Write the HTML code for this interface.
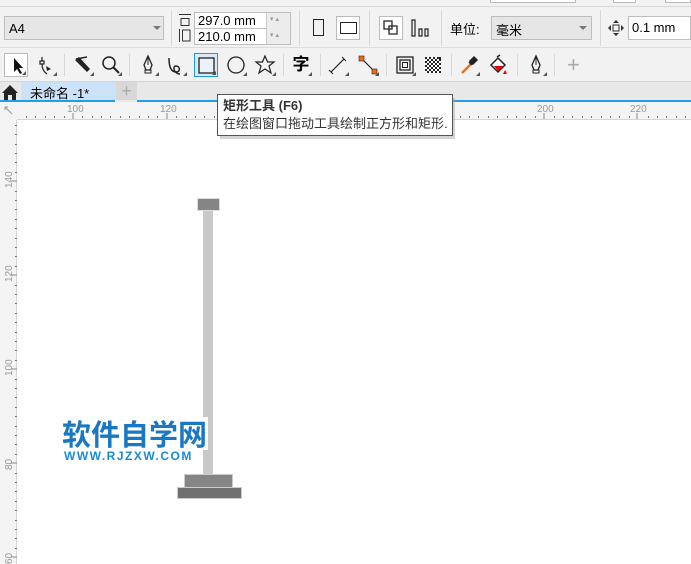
<!DOCTYPE html>
<html><head><meta charset="utf-8"><style>
*{margin:0;padding:0;box-sizing:border-box}
body{width:691px;height:564px;overflow:hidden;background:#f2f2f2;font-family:"Liberation Sans","Noto Sans CJK SC",sans-serif;position:relative;font-size:12px;color:#000}
.a{position:absolute}
.box{position:absolute;background:#fff;border:1px solid #bdbdbd}
.sep{position:absolute;width:1px;background:#d8d8d8}
.tool{position:absolute;top:53px;width:24px;height:24px}
.tool svg{width:24px;height:24px}
.tri{position:absolute;right:1px;bottom:1px;width:0;height:0;border-left:4px solid transparent;border-bottom:4px solid #555}
</style></head><body>
<div class="a" style="left:0;top:0;width:691px;height:7px;border-bottom:1px solid #d8d8d8"></div>
<div class="a" style="left:490px;top:0;width:86px;height:3px;border:1px solid #bbb;border-top:0;background:#fff"></div>
<div class="a" style="left:613px;top:0;width:23px;height:3px;border:1px solid #bbb;border-top:0;background:#fff"></div>
<div class="a" style="left:665px;top:0;width:26px;height:3px;border:1px solid #bbb;border-top:0;background:#fff"></div>
<div class="a" style="left:4px;top:16px;width:160px;height:24px;background:#e6e6e6;border:1px solid #bdbdbd;font-size:13px;padding:4px 0 0 4px">A4</div>
<div class="a" style="left:153px;top:26px;border-left:4px solid transparent;border-right:4px solid transparent;border-top:4px solid #777"></div>
<div class="sep" style="left:171px;top:10px;height:36px"></div>
<svg class="a" style="left:178px;top:13px" width="14" height="30"><path d="M1 1.5H13M3 5.5H11V12.5H3Z" fill="none" stroke="#333"/><path d="M1.5 16V29M4.5 17V28H12V17Z" fill="none" stroke="#333"/></svg>
<div class="box" style="left:194px;top:12px;width:97px;height:17px;font-size:13px;padding:0 0 0 3px;line-height:15px">297.0 mm</div>
<div class="box" style="left:194px;top:28px;width:97px;height:17px;font-size:13px;padding:0 0 0 3px;line-height:15px">210.0 mm</div>
<div class="a" style="left:266px;top:13px;width:24px;height:31px;background:#ececec;border-left:1px solid #ccc;color:#999;font-size:7px;line-height:8px;padding:3px 0 0 3px">▾ ▴<br><br>▾ ▴</div>
<div class="sep" style="left:299px;top:10px;height:36px"></div>
<div class="a" style="left:313px;top:19px;width:11px;height:17px;border:1.5px solid #222"></div>
<div class="box" style="left:336px;top:16px;width:24px;height:24px;border-color:#bbb"></div>
<div class="a" style="left:340px;top:22px;width:17px;height:12px;border:1.5px solid #222"></div>
<div class="sep" style="left:369px;top:10px;height:36px"></div>
<div class="box" style="left:379px;top:16px;width:24px;height:24px"></div>
<svg class="a" style="left:382px;top:19px" width="18" height="18"><path d="M2 2h8v8H2zM7 7h8v8H7z" fill="none" stroke="#222" stroke-width="1.3"/></svg>
<svg class="a" style="left:410px;top:19px" width="20" height="18"><path d="M2 1v16h3V1zM9 10v7h3v-7zM15 10v7h3v-7z" fill="none" stroke="#222" stroke-width="1.2"/></svg>
<div class="sep" style="left:441px;top:10px;height:36px"></div>
<div class="a" style="left:450px;top:19px;font-size:13px">单位:</div>
<div class="a" style="left:491px;top:16px;width:101px;height:24px;background:#e6e6e6;border:1px solid #bdbdbd;font-size:13px;padding:3px 0 0 4px">毫米</div>
<div class="a" style="left:579px;top:26px;border-left:4px solid transparent;border-right:4px solid transparent;border-top:4px solid #777"></div>
<div class="sep" style="left:600px;top:10px;height:36px"></div>
<svg class="a" style="left:608px;top:20px" width="16" height="16"><path d="M8 0l3 3H5zM8 16l3-3H5zM0 8l3-3v6zM16 8l-3-3v6z" fill="#333"/><rect x="5" y="5" width="6" height="6" fill="none" stroke="#333"/></svg>
<div class="box" style="left:628px;top:16px;width:63px;height:24px;font-size:13px;padding:3px 0 0 3px">0.1 mm</div>
<div class="a" style="left:0;top:47px;width:691px;height:1px;background:#dcdcdc"></div>
<div class="tool" style="left:4px;background:#fff;border:1px solid #bbb"><svg viewBox="0 0 24 24"><path d="M9 4v14l3-3 3 5 2-1-3-5h4z" fill="#111"/></svg><div class="tri"></div></div>
<div class="tool" style="left:34px"><svg viewBox="0 0 24 24"><path d="M8 4v4M6 8h4v3H6zM8 11c0 5 2 8 5 10" fill="none" stroke="#222" stroke-width="1.2"/><path d="M12 13l5 3-4 2z" fill="#222"/></svg><div class="tri"></div></div>
<div class="sep" style="left:64px;top:54px;height:22px"></div>
<div class="tool" style="left:71px"><svg viewBox="0 0 24 24"><path d="M4 7l12 12 3-3L8 4z" fill="#222"/><path d="M5 6l11-2" stroke="#222" stroke-width="1.5"/></svg><div class="tri"></div></div>
<div class="tool" style="left:99px"><svg viewBox="0 0 24 24"><circle cx="10" cy="10" r="6" fill="none" stroke="#222" stroke-width="1.5"/><path d="M14 14l6 6" stroke="#222" stroke-width="2"/></svg><div class="tri"></div></div>
<div class="sep" style="left:129px;top:54px;height:22px"></div>
<div class="tool" style="left:136px"><svg viewBox="0 0 24 24"><path d="M12 3l-4 9 2 5h4l2-5z" fill="none" stroke="#222" stroke-width="1.3"/><path d="M12 4v8M9 17h6v3H9z" fill="none" stroke="#222"/></svg><div class="tri"></div></div>
<div class="tool" style="left:164px"><svg viewBox="0 0 24 24"><path d="M5 5c0 8 2 14 7 14s4-6 0-6-2 8 4 8" fill="none" stroke="#222" stroke-width="1.5"/></svg><div class="tri"></div></div>
<div class="tool" style="left:194px;background:#dce9f7;border:1px solid #1e9ae0"><svg viewBox="0 0 24 24"><rect x="4" y="4" width="15" height="15" fill="#eaf2fb" stroke="#222" stroke-width="1.3"/></svg><div class="tri"></div></div>
<div class="tool" style="left:224px"><svg viewBox="0 0 24 24"><ellipse cx="12" cy="12" rx="8" ry="8" fill="none" stroke="#222" stroke-width="1.3"/></svg><div class="tri"></div></div>
<div class="tool" style="left:253px"><svg viewBox="0 0 24 24"><path d="M12 3l2.6 6h6.4l-5 4 2 7-6-4-6 4 2-7-5-4h6.4z" fill="none" stroke="#222" stroke-width="1.2"/></svg><div class="tri"></div></div>
<div class="sep" style="left:283px;top:54px;height:22px"></div>
<div class="tool" style="left:289px;font-size:17px;font-weight:bold;line-height:24px;text-align:center">字<div class="tri"></div></div>
<div class="sep" style="left:320px;top:54px;height:22px"></div>
<div class="tool" style="left:326px"><svg viewBox="0 0 24 24"><path d="M5 19L18 6" stroke="#222" stroke-width="1.2"/><path d="M3 17l4 4M16 4l4 4" stroke="#222"/></svg><div class="tri"></div></div>
<div class="tool" style="left:356px"><svg viewBox="0 0 24 24"><path d="M6 6l12 12" stroke="#222" stroke-width="1.2"/><rect x="3" y="3" width="5" height="5" fill="#f26a0f" stroke="#222" stroke-width=".6"/><rect x="16" y="16" width="5" height="5" fill="#f26a0f" stroke="#222" stroke-width=".6"/></svg><div class="tri"></div></div>
<div class="sep" style="left:386px;top:54px;height:22px"></div>
<div class="tool" style="left:393px"><svg viewBox="0 0 24 24"><rect x="4" y="4" width="16" height="16" fill="none" stroke="#222" stroke-width="1.3"/><rect x="7" y="7" width="10" height="10" fill="none" stroke="#222" stroke-width="1.3"/><rect x="9.5" y="9.5" width="5" height="5" fill="none" stroke="#222"/></svg><div class="tri"></div></div>
<div class="tool" style="left:421px"><svg viewBox="0 0 24 24"><rect x="4" y="4" width="16" height="16" fill="#222"/><path d="M6 4h2v2H6zM10 4h2v2h-2zM14 4h2v2h-2zM4 6h2v2H4zM8 6h2v2H8zM12 6h2v2h-2zM16 6h2v2h-2zM6 8h2v2H6zM10 8h2v2h-2zM14 8h2v2h-2zM18 8h2v2h-2zM4 10h2v2H4zM8 10h2v2H8zM12 10h2v2h-2zM16 10h2v2h-2zM6 12h2v2H6zM10 12h2v2h-2zM14 12h2v2h-2zM18 12h2v2h-2zM4 14h2v2H4zM8 14h2v2H8zM12 14h2v2h-2zM16 14h2v2h-2zM6 16h2v2H6zM10 16h2v2h-2zM14 16h2v2h-2zM18 16h2v2h-2zM8 18h2v2H8zM12 18h2v2h-2zM16 18h2v2h-2zM4 18h2v2H4z" fill="#fff"/></svg></div>
<div class="sep" style="left:451px;top:54px;height:22px"></div>
<div class="tool" style="left:457px"><svg viewBox="0 0 24 24"><path d="M5 20l9-9" stroke="#e8741e" stroke-width="2.5"/><path d="M13 8l4-4 3 3-4 4z M12 9l3 3" fill="#222" stroke="#222" stroke-width="1.5"/></svg><div class="tri"></div></div>
<div class="tool" style="left:487px"><svg viewBox="0 0 24 24"><path d="M4 12l7-7 7 7-7 7z" fill="#fff" stroke="#222" stroke-width="1.5"/><path d="M7 13h9l-5 5z" fill="#e00"/><path d="M10 4l3-2" stroke="#222" stroke-width="1.5"/><path d="M18 17l2 4h-4z" fill="#e00"/></svg></div>
<div class="sep" style="left:517px;top:54px;height:22px"></div>
<div class="tool" style="left:524px"><svg viewBox="0 0 24 24"><path d="M12 3l-4 9 2 5h4l2-5z" fill="none" stroke="#222" stroke-width="1.3"/><path d="M12 4v8M9 17h6v3H9z" fill="none" stroke="#222"/></svg><div class="tri"></div></div>
<div class="sep" style="left:554px;top:54px;height:22px"></div>
<div class="a" style="left:567px;top:54px;font-size:22px;color:#aaa;line-height:22px">+</div>
<div class="a" style="left:0;top:81px;width:691px;height:1px;background:#d5d5d5"></div>
<div class="a" style="left:0;top:82px;width:691px;height:19px;background:#e8e8e8"></div>
<svg class="a" style="left:1px;top:84px" width="18" height="16"><path d="M9 1L1 9h2v7h4v-5h4v5h4V9h2z" fill="#222"/></svg>
<div class="a" style="left:21px;top:82px;width:95px;height:19px;background:#cce2f8;font-size:13px;padding:1px 0 0 9px">未命名 -1*</div>
<div class="a" style="left:116px;top:82px;width:21px;height:19px;background:#d8d8d8;color:#aaa;font-size:18px;text-align:center;line-height:18px">+</div>
<div class="a" style="left:0;top:100px;width:691px;height:2px;background:#1ea0e8"></div>
<div class="a" style="left:115px;top:100px;width:22px;height:2px;background:#e8e8e8"></div>
<div class="a" style="left:0;top:102px;width:691px;height:18px;background:#f4f4f4"></div>
<div class="a" style="left:0;top:102px;width:17px;height:462px;background:#f4f4f4"></div>
<div class="a" style="left:17px;top:119px;width:674px;height:1px;background:#d5d5d5"></div>
<div class="a" style="left:16px;top:120px;width:1px;height:444px;background:#d5d5d5"></div>
<svg class="a" style="left:0;top:102px" width="691" height="18">
<g fill="#999" font-size="10" font-family="Liberation Sans">
<text x="67" y="10">100</text><text x="160" y="10">120</text><text x="537" y="10">200</text><text x="630" y="10">220</text></g>
<g stroke="#888"><path d="M73 11v6M167 11v6M544 11v6M637 11v6"/></g>
<g fill="#777">
<rect x="26" y="14" width="1" height="2"/><rect x="35" y="14" width="1" height="2"/><rect x="45" y="14" width="1" height="2"/><rect x="54" y="14" width="1" height="2"/><rect x="64" y="14" width="1" height="2"/><rect x="82" y="14" width="1" height="2"/><rect x="92" y="14" width="1" height="2"/><rect x="101" y="14" width="1" height="2"/><rect x="110" y="14" width="1" height="2"/><rect x="120" y="14" width="1" height="2"/><rect x="129" y="14" width="1" height="2"/><rect x="139" y="14" width="1" height="2"/><rect x="148" y="14" width="1" height="2"/><rect x="157" y="14" width="1" height="2"/><rect x="176" y="14" width="1" height="2"/><rect x="186" y="14" width="1" height="2"/><rect x="195" y="14" width="1" height="2"/><rect x="204" y="14" width="1" height="2"/><rect x="214" y="14" width="1" height="2"/>
<rect x="460" y="14" width="1" height="2"/><rect x="469" y="14" width="1" height="2"/><rect x="478" y="14" width="1" height="2"/><rect x="488" y="14" width="1" height="2"/><rect x="497" y="14" width="1" height="2"/><rect x="507" y="14" width="1" height="2"/><rect x="516" y="14" width="1" height="2"/><rect x="525" y="14" width="1" height="2"/><rect x="535" y="14" width="1" height="2"/><rect x="554" y="14" width="1" height="2"/><rect x="563" y="14" width="1" height="2"/><rect x="572" y="14" width="1" height="2"/><rect x="582" y="14" width="1" height="2"/><rect x="591" y="14" width="1" height="2"/><rect x="601" y="14" width="1" height="2"/><rect x="610" y="14" width="1" height="2"/><rect x="619" y="14" width="1" height="2"/><rect x="629" y="14" width="1" height="2"/><rect x="648" y="14" width="1" height="2"/><rect x="657" y="14" width="1" height="2"/><rect x="666" y="14" width="1" height="2"/><rect x="676" y="14" width="1" height="2"/><rect x="685" y="14" width="1" height="2"/>
</g>
<path d="M5 5l7 7M5 5h3M5 5v3" stroke="#999" fill="none"/>
</svg>
<svg class="a" style="left:0;top:120px" width="17" height="444">
<g fill="#999" font-size="10" font-family="Liberation Sans">
<text transform="translate(12,68) rotate(-90)">140</text><text transform="translate(12,162) rotate(-90)">120</text><text transform="translate(12,256) rotate(-90)">100</text><text transform="translate(12,350) rotate(-90)">80</text><text transform="translate(12,444) rotate(-90)">60</text></g>
<g stroke="#888"><path d="M11 61h6M11 155h6M11 249h6M11 343h6M11 437h6"/></g>
<g fill="#777">
<rect x="15" y="5" width="2" height="1"/><rect x="15" y="14" width="2" height="1"/><rect x="15" y="24" width="2" height="1"/><rect x="15" y="33" width="2" height="1"/><rect x="15" y="42" width="2" height="1"/><rect x="15" y="52" width="2" height="1"/><rect x="15" y="71" width="2" height="1"/><rect x="15" y="80" width="2" height="1"/><rect x="15" y="89" width="2" height="1"/><rect x="15" y="99" width="2" height="1"/><rect x="15" y="108" width="2" height="1"/><rect x="15" y="118" width="2" height="1"/><rect x="15" y="127" width="2" height="1"/><rect x="15" y="136" width="2" height="1"/><rect x="15" y="146" width="2" height="1"/><rect x="15" y="165" width="2" height="1"/><rect x="15" y="174" width="2" height="1"/><rect x="15" y="183" width="2" height="1"/><rect x="15" y="193" width="2" height="1"/><rect x="15" y="202" width="2" height="1"/><rect x="15" y="212" width="2" height="1"/><rect x="15" y="221" width="2" height="1"/><rect x="15" y="230" width="2" height="1"/><rect x="15" y="240" width="2" height="1"/><rect x="15" y="259" width="2" height="1"/><rect x="15" y="268" width="2" height="1"/><rect x="15" y="277" width="2" height="1"/><rect x="15" y="287" width="2" height="1"/><rect x="15" y="296" width="2" height="1"/><rect x="15" y="306" width="2" height="1"/><rect x="15" y="315" width="2" height="1"/><rect x="15" y="324" width="2" height="1"/><rect x="15" y="334" width="2" height="1"/><rect x="15" y="353" width="2" height="1"/><rect x="15" y="362" width="2" height="1"/><rect x="15" y="371" width="2" height="1"/><rect x="15" y="381" width="2" height="1"/><rect x="15" y="390" width="2" height="1"/><rect x="15" y="400" width="2" height="1"/><rect x="15" y="409" width="2" height="1"/><rect x="15" y="418" width="2" height="1"/><rect x="15" y="428" width="2" height="1"/>
</g></svg>
<div class="a" style="left:17px;top:120px;width:674px;height:444px;background:#fff"></div>
<div class="a" style="left:197px;top:198px;width:23px;height:13px;background:#858585;border:1px solid #ddd"></div>
<div class="a" style="left:203px;top:211px;width:10px;height:264px;background:#c8c8c8"></div>
<div class="a" style="left:184px;top:474px;width:49px;height:14px;background:#858585;border:1px solid #ccc"></div>
<div class="a" style="left:177px;top:487px;width:65px;height:12px;background:#707070;border:1px solid #ccc"></div>
<div class="a" style="left:62px;top:417px;font-size:29px;font-weight:bold;color:#1a78c2;font-family:'Noto Sans CJK SC',sans-serif;line-height:33px;background:#fff;padding-right:1px">软件自学网</div>
<div class="a" style="left:64px;top:450px;font-size:12px;font-weight:bold;color:#1a8ad6;letter-spacing:1.5px;background:#fff;line-height:12px">WWW.RJZXW.COM</div>
<div class="a" style="left:220px;top:98px;width:235px;height:41px;background:#aaa;opacity:.5"></div>
<div class="a" style="left:217px;top:94px;width:236px;height:42px;background:#fff;border:1px solid #555;padding:2px 0 0 5px;font-size:13px;color:#333;line-height:18px;white-space:nowrap"><b>矩形工具 (F6)</b><br>在绘图窗口拖动工具绘制正方形和矩形.</div>
</body></html>
